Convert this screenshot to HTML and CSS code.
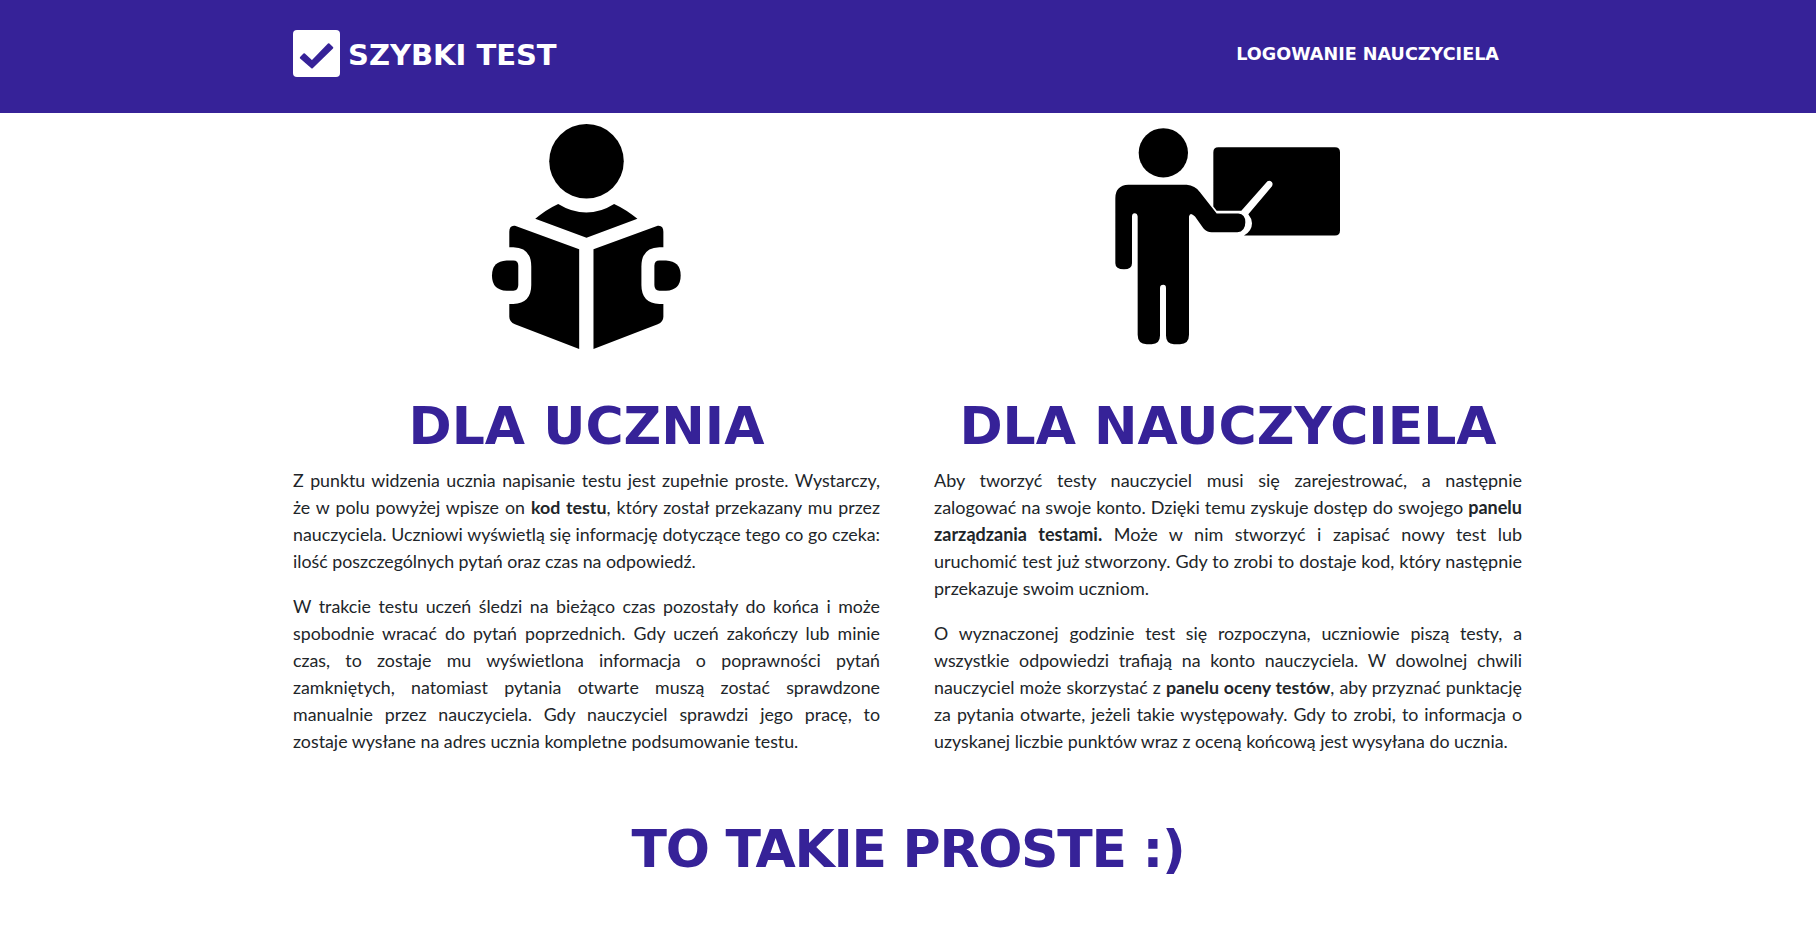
FILE: index.html
```html
<!DOCTYPE html>
<html lang="pl">
	<head>
		<meta charset="UTF-8" />
		<title>Szybki Test</title>
		<link rel="stylesheet" href="styles.css">
	</head>
	<body>
		<header class="top-bar">
			<div class="wrapper top-bar-inner">
				<a href="#" class="brand">
					<svg class="brand-icon" viewBox="0 0 47 47" aria-hidden="true">
						<rect width="47" height="47" rx="4" fill="#fff" />
						<path d="M11.2 24.2 19 31.5 35.7 14.3 39.3 17.7 19 37.5 7.8 27.8Z" fill="#362298" stroke="#362298" stroke-width="2" stroke-linejoin="round" />
					</svg>
					<span>SZYBKI TEST</span>
				</a>
				<a href="#" class="login">LOGOWANIE NAUCZYCIELA</a>
			</div>
		</header>

		<main class="wrapper columns">
			<section class="column">
				<div class="picture">
					<svg class="icon-student" viewBox="60 20 580 685" aria-hidden="true">
						<circle cx="350" cy="138" r="112" />
						<path d="M265 266Q350 318 433 266 470 283 503 311L350 368 196 311Q228 283 265 266Z" />
						<g id="half">
							<path d="M135 332 328 402V702L135 628Q118 620 118 605V567H130Q184 565 184 510V455Q184 397 130 396H118V350Q118 330 135 332Z" />
							<path d="M110 436H130Q145 436 145 452V510Q145 527 130 527H110Q66 525 66 481 66 438 110 436Z" />
						</g>
						<use href="#half" transform="matrix(-1 0 0 1 699 0)" />
					</svg>
				</div>
				<h2>DLA UCZNIA</h2>
				<p>Z punktu widzenia ucznia napisanie testu jest zupełnie proste. Wystarczy, że w polu powyżej wpisze on <b>kod testu</b>, który został przekazany mu przez nauczyciela. Uczniowi wyświetlą się informację dotyczące tego co go czeka: ilość poszczególnych pytań oraz czas na odpowiedź.</p>
				<p>W trakcie testu uczeń śledzi na bieżąco czas pozostały do końca i może spobodnie wracać do pytań poprzednich. Gdy uczeń zakończy lub minie czas, to zostaje mu wyświetlona informacja o poprawności pytań zamkniętych, natomiast pytania otwarte muszą zostać sprawdzone manualnie przez nauczyciela. Gdy nauczyciel sprawdzi jego pracę, to zostaje wysłane na adres ucznia kompletne podsumowanie testu.</p>
			</section>
			<section class="column">
				<div class="picture">
					<svg class="icon-teacher" viewBox="45 40 675 650" aria-hidden="true">
						<circle cx="190" cy="114" r="74" />
						<path d="M340 112Q340 97 355 97H705Q720 97 720 112V347Q720 362 705 362H432Q456 348 456 325 455 310 445 298L516 214Q522 200 508 198 502 198 497 205L424 288H350L340 275Z" />
						<path d="M85 210H260Q285 212 300 232L350 296H415Q436 298 436 322 436 350 412 352H335Q320 352 310 340L285 305Q270 290 267 305V660Q267 688 240 688H222Q198 688 198 662V520Q198 510 190 510 180 510 180 520V662Q180 688 155 688H140Q113 688 113 660V305Q112 295 104 295 96 295 96 305V445Q96 463 72 463 46 463 46 445V250Q46 212 85 210Z" />
					</svg>
				</div>
				<h2>DLA NAUCZYCIELA</h2>
				<p class="loose">Aby tworzyć testy nauczyciel musi się zarejestrować, a następnie zalogować na swoje konto. Dzięki temu zyskuje dostęp do swojego <b>panelu zarządzania testami.</b> Może w nim stworzyć i zapisać nowy test lub uruchomić test już stworzony. Gdy to zrobi to dostaje kod, który następnie przekazuje swoim uczniom.</p>
				<p>O wyznaczonej godzinie test się rozpoczyna, uczniowie piszą testy, a wszystkie odpowiedzi trafiają na konto nauczyciela. W dowolnej chwili nauczyciel może skorzystać z <b>panelu oceny testów</b>, aby przyznać punktację za pytania otwarte, jeżeli takie występowały. Gdy to zrobi, to informacja o uzyskanej liczbie punktów wraz z oceną końcową jest wysyłana do ucznia.</p>
			</section>
		</main>

		<h1 class="closing">TO TAKIE PROSTE :)</h1>
	</body>
</html>
```

FILE: styles.css
```css
* {
	margin: 0;
	padding: 0;
	box-sizing: border-box;
}

body {
	font-family: "Lato", "Liberation Sans", sans-serif;
	font-size: 17.8px;
	line-height: 27px;
	color: #212529;
	background-color: #fff;
}

a {
	text-decoration: none;
	color: #fff;
}

.wrapper {
	width: 1230px;
	margin: 0 auto;
}

.top-bar {
	height: 113px;
	background-color: #362298;
}

.top-bar-inner {
	display: flex;
	justify-content: space-between;
	align-items: center;
	height: 107px;
	padding-right: 24px;
}

.brand {
	display: flex;
	align-items: center;
	gap: 8px;
	font-family: "DejaVu Sans", "Liberation Sans", sans-serif;
	font-size: 29px;
	font-weight: 700;
}

.brand span {
	padding-top: 3px;
}

.brand-icon {
	width: 47px;
	height: 47px;
}

.login {
	font-family: "DejaVu Sans", "Liberation Sans", sans-serif;
	font-size: 17.6px;
	font-weight: 700;
	padding-top: 2px;
}

.columns {
	display: grid;
	grid-template-columns: 587px 588px;
	column-gap: 54px;
}

.column p {
	text-align: justify;
	margin-bottom: 18px;
}

.column p.loose {
	font-size: 18px;
}

.column b {
	font-weight: 700;
}

.picture {
	display: flex;
	justify-content: center;
	align-items: center;
	height: 246px;
	margin-bottom: 35px;
}

.picture svg {
	fill: #000;
}

.icon-student {
	width: 193px;
	height: 228px;
}

.icon-teacher {
	width: 225px;
	height: 217px;
	margin: 1px 1px 0 0;
}

h2,
.closing {
	font-family: "DejaVu Sans", "Liberation Sans", sans-serif;
	font-weight: 700;
	color: #362298;
	text-align: center;
}

h2 {
	font-size: 52px;
	line-height: 64px;
	margin-bottom: 9px;
}

.closing {
	font-size: 52px;
	line-height: 64px;
	letter-spacing: -1.3px;
	margin-top: 44px;
}
```
